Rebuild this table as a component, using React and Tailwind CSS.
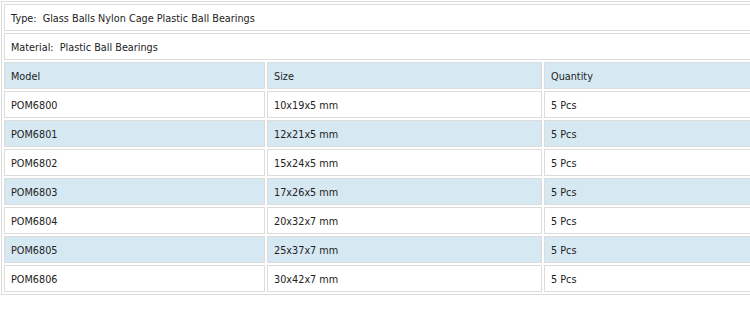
import React from "react";

const rows = [
  ["POM6800", "10x19x5 mm", "5 Pcs"],
  ["POM6801", "12x21x5 mm", "5 Pcs"],
  ["POM6802", "15x24x5 mm", "5 Pcs"],
  ["POM6803", "17x26x5 mm", "5 Pcs"],
  ["POM6804", "20x32x7 mm", "5 Pcs"],
  ["POM6805", "25x37x7 mm", "5 Pcs"],
  ["POM6806", "30x42x7 mm", "5 Pcs"],
];

const cell = "border border-[#dcdcdc] h-[27px] px-[6px] pt-[2px] pb-0 align-middle leading-[13px]";

export default function App() {
  return (
    <div className="w-[750px] h-[322px] overflow-hidden bg-white">
      <table className="w-[780px] table-fixed border-separate border-spacing-[2px] border border-[#dcdcdc] ml-px mt-px text-[9.7px] text-[#222] font-['DejaVu_Sans',sans-serif]">
        <colgroup>
          <col className="w-[261px]" />
          <col className="w-[275px]" />
          <col />
        </colgroup>
        <tbody>
          <tr>
            <td colSpan={3} className={cell}>
              Type:&nbsp;&nbsp;Glass Balls Nylon Cage Plastic Ball Bearings
            </td>
          </tr>
          <tr>
            <td colSpan={3} className={cell}>
              Material:&nbsp;&nbsp;Plastic Ball Bearings
            </td>
          </tr>
          <tr className="bg-[#d6e9f3]">
            <td className={cell}>Model</td>
            <td className={cell}>Size</td>
            <td className={cell}>Quantity</td>
          </tr>
          {rows.map((r, i) => (
            <tr key={r[0]} className={i % 2 === 1 ? "bg-[#d6e9f3]" : ""}>
              <td className={cell}>{r[0]}</td>
              <td className={cell}>{r[1]}</td>
              <td className={cell}>{r[2]}</td>
            </tr>
          ))}
        </tbody>
      </table>
    </div>
  );
}
